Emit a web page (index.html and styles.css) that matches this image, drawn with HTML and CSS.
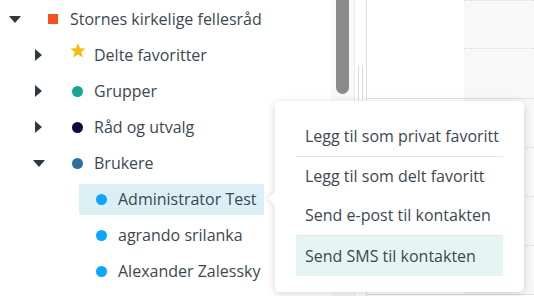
FILE: index.html
```html
<!DOCTYPE html>
<html lang="no">

<head>
    <meta charset="UTF-8">
    <meta name="viewport" content="width=device-width, initial-scale=1.0">
    <title>Kontakter</title>
    <link rel="stylesheet" href="styles.css">
</head>

<body>
    <div class="app">
        <div class="tree-panel">
            <ul class="tree">
                <li class="row lvl-0">
                    <span class="caret"><i class="tri down"></i></span>
                    <span class="node"><i class="ico square"></i>Stornes kirkelige fellesråd</span>
                </li>
                <li class="row lvl-1">
                    <span class="caret"><i class="tri right"></i></span>
                    <span class="node">
                        <i class="ico star">
                            <svg width="16" height="15" viewBox="0 0 16 15"><polygon points="8,0 10.1,5.2 15.6,5.5 11.3,9 12.8,14.6 8,11.5 3.2,14.6 4.7,9 0.4,5.5 5.9,5.2" fill="#f1bf0c"/></svg>
                        </i>Delte favoritter
                    </span>
                </li>
                <li class="row lvl-1">
                    <span class="caret"><i class="tri right"></i></span>
                    <span class="node"><i class="ico dot teal"></i>Grupper</span>
                </li>
                <li class="row lvl-1">
                    <span class="caret"><i class="tri right"></i></span>
                    <span class="node"><i class="ico dot navy"></i>Råd og utvalg</span>
                </li>
                <li class="row lvl-1">
                    <span class="caret"><i class="tri down"></i></span>
                    <span class="node"><i class="ico dot steel"></i>Brukere</span>
                </li>
                <li class="row lvl-2">
                    <span class="caret"></span>
                    <span class="node selected"><i class="ico dot blue"></i>Administrator Test</span>
                </li>
                <li class="row lvl-2">
                    <span class="caret"></span>
                    <span class="node"><i class="ico dot blue"></i>agrando srilanka</span>
                </li>
                <li class="row lvl-2">
                    <span class="caret"></span>
                    <span class="node"><i class="ico dot blue"></i>Alexander Zalessky</span>
                </li>
            </ul>
            <div class="scrollbar">
                <div class="thumb"></div>
            </div>
        </div>

        <div class="splitter">
            <div class="grip"></div>
        </div>

        <div class="content">
            <div class="block">
                <div class="col-day"></div>
                <div class="col-slots">
                    <div class="slot first"></div>
                    <div class="slot"></div>
                </div>
            </div>
            <div class="block">
                <div class="col-day"></div>
                <div class="col-slots">
                    <div class="slot"></div>
                    <div class="slot"></div>
                    <div class="slot"></div>
                    <div class="slot"></div>
                </div>
            </div>
        </div>
    </div>

    <div class="menu">
        <span class="menu-arrow"></span>
        <ul>
            <li class="menu-item sep-below">Legg til som privat favoritt</li>
            <li class="menu-item">Legg til som delt favoritt</li>
            <li class="menu-item">Send e-post til kontakten</li>
            <li class="menu-item sep-above active">Send SMS til kontakten</li>
        </ul>
    </div>
</body>

</html>
```

FILE: styles.css
```css
* {
    margin: 0;
    padding: 0;
    box-sizing: border-box;
}

ul {
    list-style: none;
}

body {
    width: 534px;
    height: 296px;
    overflow: hidden;
    position: relative;
    font-family: "Open Sans", "Noto Sans", sans-serif;
    font-size: 16px;
    color: #3d4752;
    background-color: #fff;
}

.app {
    display: flex;
    height: 296px;
}

/* tree */

.tree-panel {
    display: flex;
    width: 354px;
    flex-shrink: 0;
    overflow: hidden;
}

.tree {
    flex: 1;
    padding-top: 1px;
}

.row {
    display: flex;
    align-items: center;
    height: 36px;
}

.lvl-1 {
    padding-left: 24px;
}

.lvl-2 {
    padding-left: 48px;
}

.caret {
    display: flex;
    justify-content: center;
    align-items: center;
    width: 29px;
    flex-shrink: 0;
}

.tri {
    display: block;
    width: 0;
    height: 0;
}

.tri.down {
    border-left: 6px solid transparent;
    border-right: 6px solid transparent;
    border-top: 7px solid #2e3842;
}

.tri.right {
    border-top: 6px solid transparent;
    border-bottom: 6px solid transparent;
    border-left: 7px solid #2e3842;
}

.node {
    display: flex;
    align-items: center;
    height: 31px;
    margin-left: 2px;
    padding: 0 7px 0 17px;
    border-radius: 2px;
    white-space: nowrap;
}

.node.selected {
    background-color: #dbf0f5;
}

.ico {
    display: block;
    width: 11px;
    height: 11px;
    margin-right: 11px;
    flex-shrink: 0;
}

.ico.square {
    width: 10px;
    height: 10px;
    margin-right: 12px;
    background-color: #f4511e;
}

.ico.star {
    width: 16px;
    height: 15px;
    margin: 0 8px 9px -2px;
}

.ico.star svg {
    display: block;
}

.dot {
    border-radius: 50%;
}

.dot.teal {
    background-color: #16a596;
}

.dot.navy {
    background-color: #0c0a3e;
}

.dot.steel {
    background-color: #2d7199;
}

.dot.blue {
    background-color: #0aa6ff;
}

.scrollbar {
    width: 23px;
    flex-shrink: 0;
    padding-left: 5px;
    background-color: #f9f9f9;
}

.thumb {
    width: 13px;
    height: 94px;
    border-radius: 0 0 7px 7px;
    background-color: #8a8a8a;
}

/* splitter between panels */

.splitter {
    width: 13px;
    flex-shrink: 0;
    border-left: 1px solid #eaeaea;
    border-right: 1px solid #dedede;
    padding-top: 65px;
}

.grip {
    width: 5px;
    height: 150px;
    margin-left: 3px;
    border-left: 1px solid #dcdcdc;
    border-right: 1px solid #dcdcdc;
}

/* calendar area */

.content {
    flex: 1;
    display: flex;
    flex-direction: column;
}

.block {
    display: flex;
    height: 99px;
    border-bottom: 1px solid #e2e2e2;
}

.block + .block {
    height: 196px;
}

.col-day {
    width: 97px;
    background-color: #fff;
}

.col-slots {
    flex: 1;
    background-color: #f8f8f8;
}

.slot {
    height: 49px;
    border-bottom: 1px dotted #dadada;
}

.slot.first {
    border-top: 1px dotted #dadada;
    height: 49px;
}

.block .slot:last-child {
    border-bottom: none;
}

/* context menu */

.menu {
    position: absolute;
    left: 275px;
    top: 101px;
    width: 249px;
    padding: 16px 21px;
    background-color: #fff;
    border-radius: 5px;
    box-shadow: 0 2px 10px rgba(0, 0, 0, 0.16);
}

.menu-arrow {
    position: absolute;
    left: -5px;
    top: 92px;
    width: 11px;
    height: 11px;
    background-color: #fff;
    transform: rotate(45deg);
    box-shadow: -2px 2px 3px rgba(0, 0, 0, 0.06);
}

.menu ul {
    position: relative;
}

.menu-item {
    height: 39px;
    line-height: 39px;
    padding-left: 9px;
    white-space: nowrap;
}

.menu-item.sep-below {
    height: 40px;
    border-bottom: 1px solid #e6e6e6;
}

.menu-item.sep-above {
    height: 41px;
    line-height: 40px;
    border-top: 1px solid #e6e6e6;
}

.menu-item.active {
    background-color: #e5f5f4;
}
```
